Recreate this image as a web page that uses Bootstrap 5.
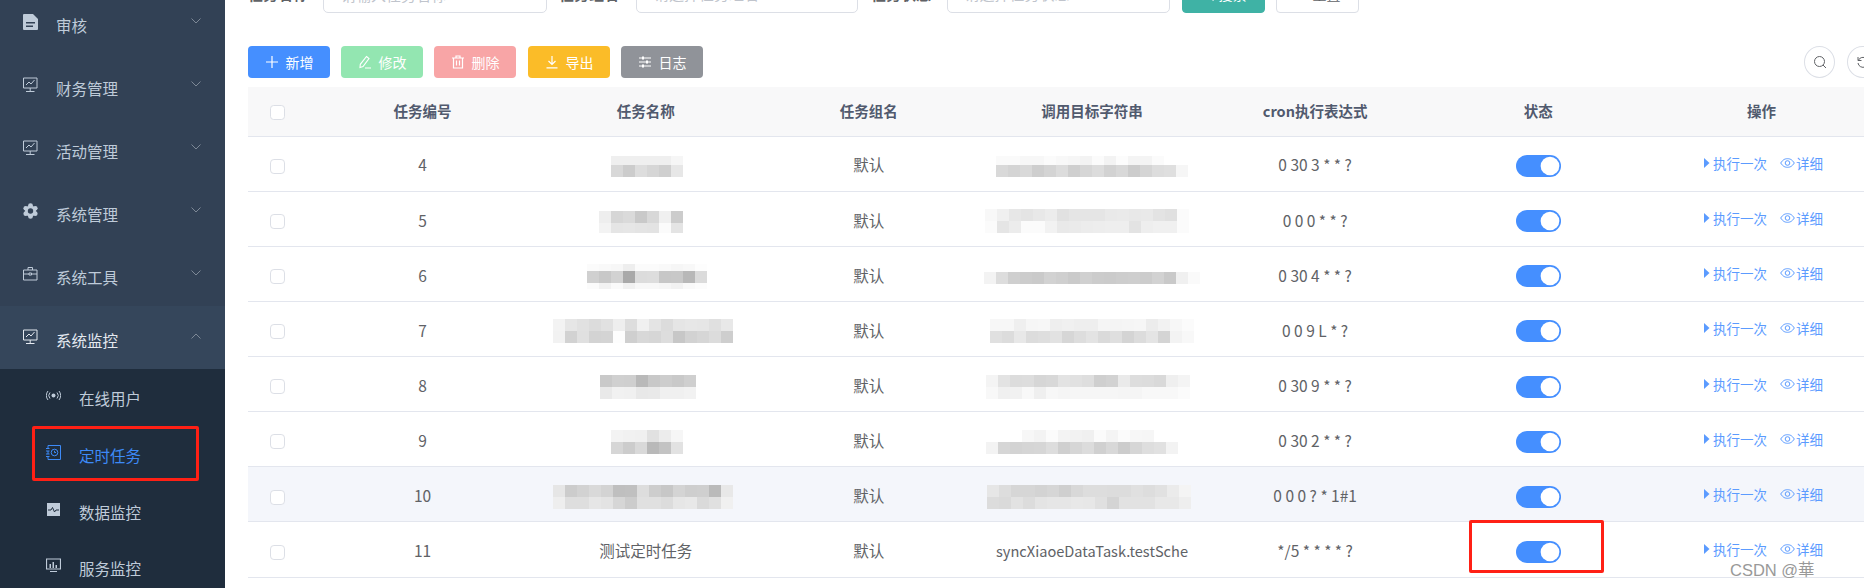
<!DOCTYPE html>
<html lang="zh-CN">
<head>
  <meta charset="UTF-8" />
  <title>定时任务</title>
  <link href="https://cdn.jsdelivr.net/npm/bootstrap@5.3.0/dist/css/bootstrap.min.css" rel="stylesheet">
  <style>
    html, body { height: 588px; overflow: hidden; }
    body { font-family: "Noto Sans CJK SC", sans-serif; font-size: 15.5px; color: #606266; background: #fff; }
    .page-wrap { width: 1864px; height: 588px; overflow: hidden; }

    /* sidebar */
    .side { width: 225px; flex: none; background: #324155; margin-top: -9px; height: 700px; }
    .side-item { height: 63px; padding-left: 23px; padding-right: 24px; padding-top: 6px; color: #bfcbd9; }
    .side-item.hovered { background: #35465b; color: #e4e9f0; }
    .side-ico { width: 15px; height: 16px; margin-right: 18px; margin-top: -8px; flex: none; }
    .side-arrow { width: 10px; height: 6px; margin-left: auto; margin-top: -10px; flex: none; }
    .side-sub { background: #1f2d3d; }
    .sub-item { height: 56.7px; padding-left: 46px; padding-top: 3px; color: #bfcbd9; }
    .sub-item.current { color: #3d8af7; }
    .sub-ico { width: 15px; height: 15px; margin-right: 18px; margin-top: -6px; flex: none; }

    /* main area */
    .main-area { flex: 1; min-width: 0; margin-top: -25px; padding-left: 23px; }
    .search-row { height: 38px; }
    .search-label { font-weight: 700; width: 75px; flex: none; font-size: 15px; }
    .search-label.follow { margin-left: 12px; width: 77px; }
    .search-label.third { margin-left: 13px; width: 75.5px; }
    .search-row .form-control, .search-row .form-select { height: 38px; border-radius: 5px; border-color: #dcdfe6; font-size: 15px; padding-left: 17px; color: #c0c4cc; box-shadow: none; }
    .search-row .form-control::placeholder { color: #c0c4cc; }
    .wide-input { width: 224px; flex: none; }
    .wide-select { width: 222px; flex: none; }
    .third-select { width: 223.5px; flex: none; }
    .btn-find, .btn-reset { height: 38px; width: 83px; font-size: 14px; border-radius: 4px; padding: 0; gap: 5px; }
    .btn-find svg, .btn-reset svg { width: 13px; height: 13px; }
    .btn-find { background: #3fb2a5; border-color: #3fb2a5; color: #fff; margin-left: 12px; }
    .btn-reset { background: #fff; border-color: #dcdfe6; color: #606266; margin-left: 11px; }

    .tool-row { margin-top: 33px; height: 32px; margin-right: -14px; gap: 11px; }
    .tool-btn { width: 82px; height: 32px; padding: 0; font-size: 14px; color: #fff; border: 0; border-radius: 4px; gap: 7px; }
    .tool-btn svg { width: 14px; height: 14px; }
    .tb-blue { background: #458fff; }
    .tb-green { background: #93e6b1; }
    .tb-red { background: #f8a5a6; }
    .tb-yellow { background: #fbbc28; margin-left: 1px; }
    .tb-gray { background: #909399; }
    .round-btn { width: 31px; height: 32px; border-radius: 50%; border: 1px solid #dcdfe6; background: #fff; padding: 0; flex: none; }
    .round-btn svg { width: 14px; height: 14px; }
    .round-group { gap: 12px; }

    /* table */
    .job-table { width: 1625px; table-layout: fixed; margin: 9px 0 0; border-collapse: collapse; }
    .job-table th, .job-table td { text-align: center; vertical-align: middle; padding: 3px 0 0; border-bottom: 1px solid #e3e6ee; box-shadow: none; white-space: nowrap; color: #606266; font-weight: 400; background: transparent; }
    .job-table th { height: 49px; background: #f8f8f9; color: #515a6e; font-weight: 700; font-size: 14.5px; padding-top: 0; }
    .job-table td { height: 55.15px; }
    .job-table tr.hover-row td { background: #f4f6fb; }
    .col-check { width: 63px; padding-right: 4px !important; }
    .job-check { width: 15px; height: 15px; margin: -2px 0 0; border-color: #dcdfe6; border-radius: 2px; vertical-align: middle; }
    .mosaic { display: inline-grid; vertical-align: middle; }
    .target-text { font-size: 14.6px; }
    .job-switch { padding: 2px 0 0; min-height: 0; margin: 0; line-height: 0; }
    .job-switch .form-check-input { width: 45px; height: 22px; margin: 0; float: none; border: 0; background-color: #458fff; background-position: right center;
      background-image: url("data:image/svg+xml,%3csvg xmlns='http://www.w3.org/2000/svg' viewBox='-4 -4 8 8'%3e%3ccircle r='3.4' fill='%23fff'/%3e%3c/svg%3e"); }
    .op-cell { color: #5b9bff; font-size: 13.5px; gap: 13px; margin-top: -4px; padding-left: 3px; }
    .op-link { color: #5b9bff; text-decoration: none; gap: 1px; }
    .op-link svg { flex: none; }

    /* annotations drawn over the screenshot */
    .red-box { position: absolute; border: 3px solid #ff2015; border-radius: 2px; pointer-events: none; }
    .red-menu { left: 32px; top: 426px; width: 167px; height: 55px; }
    .red-switch { left: 1469px; top: 520px; width: 135px; height: 53px; }
    .mark-text { position: absolute; left: 1730px; top: 558px; font-family: "Liberation Sans", "Noto Sans CJK TC", sans-serif; font-size: 16.5px; color: #999; background: transparent; }
  </style>
</head>
<body>
  <div class="page-wrap d-flex position-relative">
    <nav class="side d-flex flex-column flex-shrink-0">
      <div class="side-item d-flex align-items-center">
        <svg class="side-ico" viewBox="0 0 15 16"><path fill="#bfcbd9" d="M1 0h9l5 5v10a1 1 0 0 1-1 1H1a1 1 0 0 1-1-1V1a1 1 0 0 1 1-1z"/><path fill="#324155" d="M3 8h9v1.500H3zM3 11.500h7V13H3z"/></svg>
        审核
        <svg class="side-arrow" viewBox="0 0 10 6"><path d="M.5.5 5 5 9.500.5" fill="none" stroke="#7d8896"/></svg>
      </div>
      <div class="side-item d-flex align-items-center">
        <svg class="side-ico" viewBox="0 0 15 16"><path d="M.5 1h13.500v10H.5zM7.200 11v3.500M3 14.500h8.500M3 8l3-3 2 2 3.500-4" fill="none" stroke="#bfcbd9"/></svg>
        财务管理
        <svg class="side-arrow" viewBox="0 0 10 6"><path d="M.5.5 5 5 9.500.5" fill="none" stroke="#7d8896"/></svg>
      </div>
      <div class="side-item d-flex align-items-center">
        <svg class="side-ico" viewBox="0 0 15 16"><path d="M.5 1h13.500v10H.5zM7.200 11v3.500M3 14.500h8.500M3 8l3-3 2 2 3.500-4" fill="none" stroke="#bfcbd9"/></svg>
        活动管理
        <svg class="side-arrow" viewBox="0 0 10 6"><path d="M.5.5 5 5 9.500.5" fill="none" stroke="#7d8896"/></svg>
      </div>
      <div class="side-item d-flex align-items-center">
        <svg class="side-ico" viewBox="0 0 15 16"><g fill="#bfcbd9"><circle cx="7.500" cy="8" r="5.500"/><circle cx="7.500" cy="2.600" r="2.400"/><circle cx="7.500" cy="13.400" r="2.400"/><circle cx="2.800" cy="5.300" r="2.400"/><circle cx="12.200" cy="5.300" r="2.400"/><circle cx="2.800" cy="10.700" r="2.400"/><circle cx="12.200" cy="10.700" r="2.400"/></g><circle cx="7.500" cy="8" r="2.700" fill="#324155"/></svg>
        系统管理
        <svg class="side-arrow" viewBox="0 0 10 6"><path d="M.5.5 5 5 9.500.5" fill="none" stroke="#7d8896"/></svg>
      </div>
      <div class="side-item d-flex align-items-center">
        <svg class="side-ico" viewBox="0 0 15 16"><path d="M.5 4h13.500v10H.5zM5 4V1.500h4.500V4M.5 8h5.500M8.500 8h5.500M6 7h2.500v2H6z" fill="none" stroke="#bfcbd9"/></svg>
        系统工具
        <svg class="side-arrow" viewBox="0 0 10 6"><path d="M.5.5 5 5 9.500.5" fill="none" stroke="#7d8896"/></svg>
      </div>
      <div class="side-item hovered d-flex align-items-center">
        <svg class="side-ico" viewBox="0 0 15 16"><path d="M.5 1h13.500v10H.5zM7.200 11v3.500M3 14.500h8.500M3 8l3-3 2 2 3.500-4" fill="none" stroke="#e4e9f0"/></svg>
        系统监控
        <svg class="side-arrow" viewBox="0 0 10 6"><path d="M.5 5.500 5 1l4.500 4.500" fill="none" stroke="#7d8896"/></svg>
      </div>
      <div class="side-sub">
        <div class="sub-item d-flex align-items-center">
          <svg class="sub-ico" viewBox="0 0 15 15"><circle cx="7.500" cy="7.500" r="2" fill="#bfcbd9"/><path d="M4 4.500a4.500 4.500 0 0 0 0 6M11 4.500a4.500 4.500 0 0 1 0 6M2 3a7 7 0 0 0 0 9M13 3a7 7 0 0 1 0 9" fill="none" stroke="#bfcbd9"/></svg>
          在线用户
        </div>
        <div class="sub-item current d-flex align-items-center">
          <svg class="sub-ico" viewBox="0 0 15 15"><path d="M2 .5h12.500v14H2M2 .5v3M2 6v3M2 11.500v3M0 3.500h3.500M0 6h3.500M0 9h3.500M0 11.500h3.500" fill="none" stroke="#3d8af7"/><circle cx="8.500" cy="7.500" r="3.300" fill="none" stroke="#3d8af7"/><path d="M8.500 5.800v1.700h1.500" fill="none" stroke="#3d8af7"/></svg>
          定时任务
        </div>
        <div class="sub-item d-flex align-items-center">
          <svg class="sub-ico" viewBox="0 0 15 15"><path fill="#bfcbd9" d="M1 1h13v13H1z"/><path d="M2 8h3l1.500-2.500L8.500 10l1.500-2h3" fill="none" stroke="#1f2d3d"/></svg>
          数据监控
        </div>
        <div class="sub-item d-flex align-items-center">
          <svg class="sub-ico" viewBox="0 0 15 15"><path d="M.5 1h14v10H.5zM4 13.500h7" fill="none" stroke="#bfcbd9" stroke-width="1.200"/><path fill="#bfcbd9" d="M3.500 6h1.500v4H3.500zM6.500 4h1.500v6H6.500zM9.500 7H11v3H9.500z"/></svg>
          服务监控
        </div>
      </div>
    </nav>

    <main class="main-area">
      <form class="search-row d-flex align-items-center">
        <label class="search-label">任务名称</label>
        <input class="form-control wide-input" placeholder="请输入任务名称">
        <label class="search-label follow">任务组名</label>
        <select class="form-select wide-select"><option>请选择任务组名</option></select>
        <label class="search-label third">任务状态</label>
        <select class="form-select third-select"><option>请选择任务状态</option></select>
        <button type="button" class="btn btn-find d-flex align-items-center justify-content-center">
          <svg viewBox="0 0 14 14"><circle cx="6" cy="6" r="5" fill="none" stroke="#fff" stroke-width="1.300"/><path d="M10 10l3.500 3.500" stroke="#fff" stroke-width="1.300"/></svg>搜索
        </button>
        <button type="button" class="btn btn-reset d-flex align-items-center justify-content-center">
          <svg viewBox="0 0 14 14"><path d="M2 2v3.500h3.500M2.300 5.500A5 5 0 1 1 2 8" fill="none" stroke="#606266"/></svg>重置
        </button>
      </form>

      <div class="tool-row d-flex align-items-center">
        <button class="btn tool-btn tb-blue d-flex align-items-center justify-content-center">
          <svg viewBox="0 0 14 14"><path d="M7 1v12M1 7h12" stroke="#fff" stroke-width="1.200"/></svg>新增
        </button>
        <button class="btn tool-btn tb-green d-flex align-items-center justify-content-center">
          <svg viewBox="0 0 14 14"><path d="M8.500 1.500l2.500 2L5 11.500l-3 1 .3-3.200zM7 13h6" fill="none" stroke="#fff" stroke-width="1.100"/></svg>修改
        </button>
        <button class="btn tool-btn tb-red d-flex align-items-center justify-content-center">
          <svg viewBox="0 0 14 14"><path d="M1 3h12M5 3V1h4v2M2.500 3v10h9V3M5.500 5.500v5M8.500 5.500v5" fill="none" stroke="#fff" stroke-width="1.200"/></svg>删除
        </button>
        <button class="btn tool-btn tb-yellow d-flex align-items-center justify-content-center">
          <svg viewBox="0 0 14 14"><path d="M7 1v8M3.500 6 7 9.500 10.500 6M1.500 12.800h11" fill="none" stroke="#fff" stroke-width="1.200"/></svg>导出
        </button>
        <button class="btn tool-btn tb-gray d-flex align-items-center justify-content-center">
          <svg viewBox="0 0 14 14"><path d="M1 3h12M1 7h12M1 11h12" stroke="#fff"/><path d="M4 1.500h2v3H4zM8 5.500h2v3H8zM4 9.500h2v3H4z" fill="#fff"/></svg>日志
        </button>
        <div class="round-group ms-auto d-flex">
          <button class="round-btn d-flex align-items-center justify-content-center">
            <svg viewBox="0 0 14 14"><circle cx="6.500" cy="6.500" r="5" fill="none" stroke="#606266"/><path d="M10 10l3 3" stroke="#606266"/></svg>
          </button>
          <button class="round-btn d-flex align-items-center justify-content-center">
            <svg viewBox="0 0 14 14"><path d="M2 2v3.500h3.500M2.300 5.500A5 5 0 1 1 2 8" fill="none" stroke="#606266"/></svg>
          </button>
        </div>
      </div>

      <table class="table job-table">
        <thead>
          <tr>
            <th class="col-check"><input class="form-check-input job-check" type="checkbox"></th>
            <th>任务编号</th><th>任务名称</th><th>任务组名</th><th>调用目标字符串</th><th>cron执行表达式</th><th>状态</th><th>操作</th>
          </tr>
        </thead>
        <tbody id="jobRows"></tbody>
      </table>
    </main>

    <div class="red-box red-menu"></div>
    <div class="red-box red-switch"></div>
    <div class="mark-text">CSDN @華</div>
  </div>

  <script>
    // blurred cells of the screenshot: each row is [height, grey levels], dx nudges the block sideways
    const jobs = [
      { id: 4, cron: "0 30 3 * * ?",
        name: { rows: [[9, "ef ef ef ef ef f6"], [12, "d8 cc dd d6 cf e7"]], dx: 2 },
        target: { rows: [[9, "fa fa f7 f7 fb f8 f6 f3 fb f3 fc f4 f4 fb ff ff"], [12, "d9 d4 d9 ce d4 dc cf d6 dc d2 d8 cc d5 dd df f6"]], dx: 0 } },
      { id: 5, cron: "0 0 0 * * ?",
        name: { rows: [[12, "ee d6 da c9 d8 f0 cc"], [10, "f3 e5 e6 e4 e3 fb e4"]], dx: -10 },
        target: { rows: [[12, "f8 f0 e7 e4 e8 ec e1 e5 e5 e5 e9 ea e8 e9 e3 e0 fb"], [12, "fb e5 ec fb fb f2 e9 ea ec ed ee ee e3 ee f0 f0 fb"]], dx: -10 } },
      { id: 6, cron: "0 30 4 * * ?",
        name: { rows: [[7, "fb f9 f7 ee fb fb f9 f6 f8 fd"], [12, "d0 c8 d2 a9 dc dd c7 c8 b8 db"], [6, "fb f2 fa f1 f8 f8 f6 f2 f9 fc"]], dx: 2 },
        target: { rows: [[12, "f3 dd cf cc ca d2 cf ca d0 cc cb cd ce cc d2 c9 f0 fa"]], dx: 0 } },
      { id: 7, cron: "0 0 9 L * ?",
        name: { rows: [[12, "f3 e6 e1 dc e1 ee dd f0 e4 dc e5 e7 e6 e0 e8"], [12, "f2 d2 e0 d3 d4 fd cf d8 d6 dd c7 d2 d6 dc ce"]], dx: -6 },
        target: { rows: [[12, "f7 f7 ef f6 f7 ee f0 ee ee f5 f4 f5 f6 ec f2 f7 fb"], [12, "e0 dc e8 dc de e2 d6 dd e3 da df d4 dc e4 d4 f3 f8"]], dx: 0 } },
      { id: 8, cron: "0 30 9 * * ?",
        name: { rows: [[12, "c9 d0 cf b9 c8 cd c9 cf"], [12, "e9 f1 f0 e8 e9 f0 f0 f2"]], dx: 4 },
        target: { rows: [[12, "f4 e3 dc dd d6 d8 e3 e1 de cf d2 ea dd dc d9 ef f4"], [12, "f8 f0 f1 f8 ef f7 f5 f6 f6 f6 f6 f5 f5 f8 f8 f8 fb"]], dx: -8 } },
      { id: 9, cron: "0 30 2 * * ?",
        name: { rows: [[12, "f3 f1 f0 e1 ec f6"], [12, "d6 cc d9 b9 c3 e2"]], dx: 2 },
        target: { rows: [[12, "ff ff ff f7 f3 fb f3 f2 f0 fb f4 fb f7 f6 ff ff ff"], [12, "f3 d6 d3 d5 d6 dd cf d6 dc d0 d8 cc d6 de e1 f3 ff"]], dx: -8 } },
      { id: 10, cron: "0 0 0 ? * 1#1", hover: true,
        name: { rows: [[12, "e6 cc d2 d9 d3 bf c0 dd cd c7 d4 ce cf ba e8"], [12, "ee de de e6 e3 d6 cc e0 e0 dc e6 e8 da e0 f0"]], dx: -6 },
        target: { rows: [[12, "e6 dd d6 d6 d3 d6 cf d8 dd dd dc dc e0 dd e1 eb f4"], [12, "dc da e2 dc e4 e6 e6 e8 e7 e0 d4 e2 e2 e2 e8 e8 ee"]], dx: -6 } },
      { id: 11, cron: "*/5 * * * * ?", nameText: "测试定时任务", targetText: "syncXiaoeDataTask.testSche" }
    ];

    const mosaic = ({ rows, dx }) => {
      const count = rows[0][1].split(" ").length;
      const cells = rows.map(r => r[1].split(" ").map(g => `<i style="background:#${g}${g}${g}"></i>`).join("")).join("");
      const heights = rows.map(r => r[0] + "px").join(" ");
      return `<span class="mosaic" style="grid-template-columns:repeat(${count},12px);grid-template-rows:${heights};margin-left:${dx}px">${cells}</span>`;
    };

    document.getElementById("jobRows").innerHTML = jobs.map(j => `
      <tr class="${j.hover ? "hover-row" : ""}">
        <td class="col-check"><input class="form-check-input job-check" type="checkbox"></td>
        <td>${j.id}</td>
        <td>${j.nameText || mosaic(j.name)}</td>
        <td>默认</td>
        <td>${j.targetText ? `<span class="target-text">${j.targetText}</span>` : mosaic(j.target)}</td>
        <td>${j.cron}</td>
        <td><div class="form-check form-switch job-switch"><input class="form-check-input" type="checkbox" role="switch" checked></div></td>
        <td>
          <div class="op-cell d-flex justify-content-center align-items-center">
            <a class="op-link d-flex align-items-center" href="#"><svg width="9" height="10" viewBox="0 0 9 10"><path d="M1 0l5.500 5L1 10z" fill="#5b9bff"/></svg>执行一次</a>
            <a class="op-link d-flex align-items-center" href="#"><svg width="15" height="10" viewBox="0 0 15 10"><path d="M.7 5C3 1.500 5 .7 7.500.7S12 1.500 14.300 5C12 8.500 10 9.300 7.500 9.300S3 8.500.7 5z" fill="none" stroke="#5b9bff"/><circle cx="7.500" cy="5" r="2.300" fill="none" stroke="#5b9bff"/></svg>详细</a>
          </div>
        </td>
      </tr>`).join("");
  </script>
  <script src="https://cdn.jsdelivr.net/npm/bootstrap@5.3.0/dist/js/bootstrap.bundle.min.js"></script>
</body>
</html>
